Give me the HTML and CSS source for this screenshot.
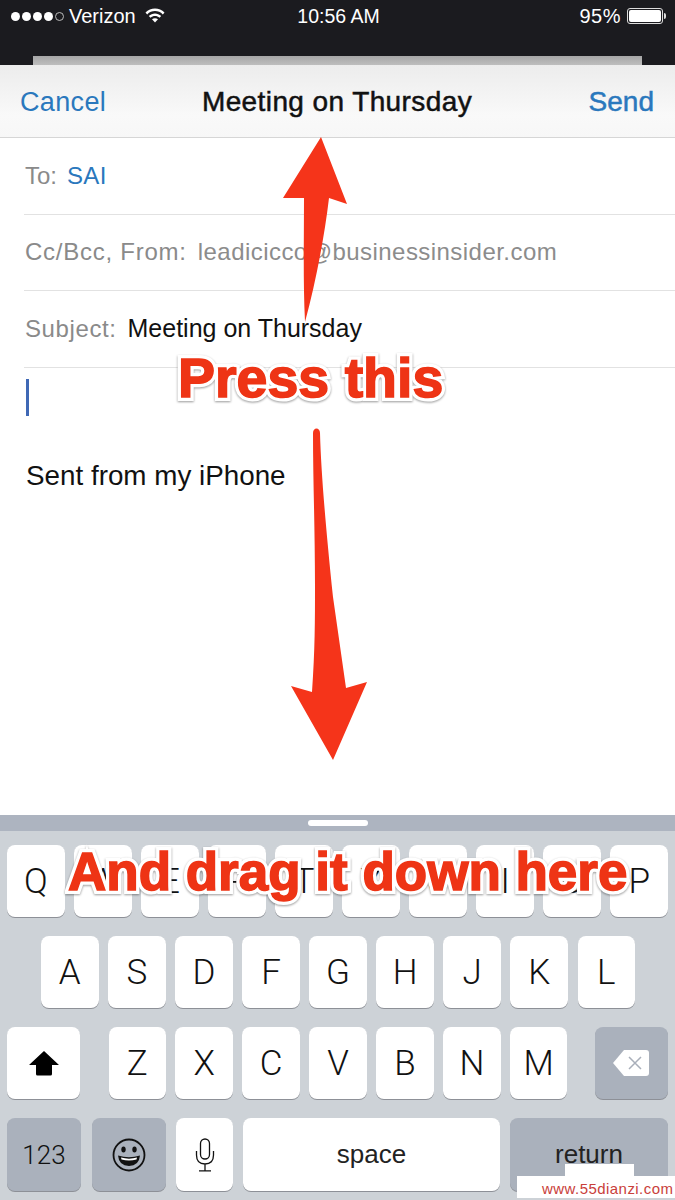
FILE: index.html
```html
<!DOCTYPE html>
<html lang="en">
<head>
<meta charset="utf-8">
<title>Meeting on Thursday</title>
<link rel="stylesheet" href="styles.css">
</head>
<body>
<div class="phone">
  <header class="status">
    <div class="status-left">
      <span class="dots"><i class="dot"></i><i class="dot"></i><i class="dot"></i><i class="dot"></i><i class="dot dot-empty"></i></span>
      <span class="carrier">Verizon</span>
      <svg class="wifi" width="20" height="16" viewBox="0 0 20 16"><path d="M0.5 5.5C5.5 0.2 14.5 0.2 19.5 5.5L17.8 7.4C13.5 3 6.5 3 2.2 7.4Z" fill="#fff"/><path d="M3.8 9C7.2 5.6 12.8 5.6 16.2 9L14.5 10.8C11.9 8.4 8.1 8.4 5.5 10.8Z" fill="#fff"/><path d="M7 12.2C8.7 10.8 11.3 10.8 13 12.2L10 15.4Z" fill="#fff"/></svg>
    </div>
    <div class="clock">10:56 AM</div>
    <div class="status-right">
      <span class="pct">95%</span>
      <span class="battery"><span class="battery-fill"></span></span>
      <span class="battery-tip"></span>
    </div>
  </header>
  <div class="strip"></div>
  <nav class="nav">
    <span class="nav-btn">Cancel</span>
    <span class="nav-title">Meeting on Thursday</span>
    <span class="nav-btn nav-send">Send</span>
  </nav>
  <main class="compose">
    <div class="row"><span class="label label-to">To:</span><span class="rcpt">SAI</span></div>
    <div class="row"><span class="label label-wide">Cc/Bcc, From:</span><span class="from">leadicicco@businessinsider.com</span></div>
    <div class="row"><span class="label label-subject">Subject:</span><span class="subject">Meeting on Thursday</span></div>
    <div class="body">
      <div class="caret"></div>
      <div class="signature">Sent from my iPhone</div>
    </div>
  </main>
  <section class="keyboard">
    <div class="kb-top"><span class="grip"></span></div>
    <div class="kb-rows">
      <div class="kb-row">
        <span class="key">Q</span><span class="key">W</span><span class="key">E</span><span class="key">R</span><span class="key">T</span><span class="key">Y</span><span class="key">U</span><span class="key">I</span><span class="key">O</span><span class="key">P</span>
      </div>
      <div class="kb-row kb-row-home">
        <span class="key">A</span><span class="key">S</span><span class="key">D</span><span class="key">F</span><span class="key">G</span><span class="key">H</span><span class="key">J</span><span class="key">K</span><span class="key">L</span>
      </div>
      <div class="kb-row">
        <span class="key key-shift"><svg width="32" height="26" viewBox="0 0 32 26"><path d="M16 1L31 15H24V24Q24 25.500 22.500 25.500H9.500Q8 25.500 8 24V15H1Z" fill="#000"/></svg></span>
        <span class="key key-first">Z</span><span class="key">X</span><span class="key">C</span><span class="key">V</span><span class="key">B</span><span class="key">N</span><span class="key">M</span>
        <span class="key key-del"><svg width="38" height="28" viewBox="0 0 38 28"><path d="M12 1H34Q37 1 37 4V24Q37 27 34 27H12L1 14Z" fill="#fff"/><path d="M17 8L29 20M29 8L17 20" stroke="#a9afba" stroke-width="1.500" fill="none"/></svg></span>
      </div>
      <div class="kb-row kb-row-bottom">
        <span class="key key-fn key-123">123</span>
        <span class="key key-fn key-emoji"><svg width="34" height="34" viewBox="0 0 34 34"><circle cx="17" cy="17" r="15.500" fill="none" stroke="#111" stroke-width="1.800"/><ellipse cx="11.500" cy="11.500" rx="2.200" ry="3" fill="#111"/><ellipse cx="22.500" cy="11.500" rx="2.200" ry="3" fill="#111"/><path d="M6 17.500Q17 21 28 17.500Q27 28 17 28Q7 28 6 17.500Z" fill="#111"/><path d="M9 19.500Q17 21.800 25 19.500L24.500 21.500Q17 23.500 9.500 21.500Z" fill="#fff"/></svg></span>
        <span class="key key-mic"><svg width="20" height="34" viewBox="0 0 20 34"><rect x="5.500" y="1" width="9" height="20" rx="4.500" fill="none" stroke="#111" stroke-width="1.300"/><path d="M1.500 13V17Q1.500 26 10 26Q18.500 26 18.500 17V13M10 26V32.500M4 32.800H16" fill="none" stroke="#111" stroke-width="1.300"/></svg></span>
        <span class="key key-space">space</span>
        <span class="key key-fn key-return">return</span>
      </div>
    </div>
  </section>

  <svg class="arrows" width="675" height="800" viewBox="0 0 675 800">
    <path d="M321 137L347 204L329 198C324 240 315 285 305 322C303 280 304 240 304 198L283 198Z" fill="#f5341a"/>
    <path d="M313 433C313 427 320 427 320 433C321 470 325 520 333 597L346 688L367 682L333 760L291 686L312 692C315 650 315 620 315 587C315 530 313 480 313 433Z" fill="#f5341a"/>
  </svg>
  <div class="callout callout-press" data-text="Press this">Press this</div>
  <div class="callout callout-drag" data-text="And drag it down here">And drag it down here</div>
  <div class="mark-top"></div>
  <div class="mark">www.55dianzi.com</div>
</div>
</body>
</html>
```
FILE: styles.css
```css
* { box-sizing: border-box; }
html, body { margin: 0; padding: 0; }
body { width: 675px; height: 1200px; overflow: hidden; background: #fff; font-family: "Liberation Sans", Arial, sans-serif; }

.phone { position: relative; width: 675px; height: 1200px; display: flex; flex-direction: column; background: #1b1b1f; overflow: hidden; }

.status { height: 56px; flex: none; padding: 4px 9px 0 11px; display: grid; grid-template-columns: 1fr auto 1fr; align-items: start; color: #fff; font-size: 20px; line-height: 24px; }
.status-left { display: flex; align-items: center; }
.dots { display: flex; gap: 2px; margin-right: 5px; }
.dot { width: 9px; height: 9px; border-radius: 50%; background: #fff; }
.dot-empty { background: none; border: 1px solid #bbb; }
.carrier { font-size: 20px; }
.wifi { margin-left: 9px; margin-top: -3px; }
.clock { font-size: 19.500px; }
.status-right { display: flex; align-items: center; justify-content: flex-end; }
.pct { font-size: 20px; margin-right: 6px; letter-spacing: .5px; }
.battery { width: 36px; height: 16px; border: 1px solid #ddd; border-radius: 3px; padding: 1px; display: flex; }
.battery-fill { flex: 1; background: #fff; border-radius: 2px; }
.battery-tip { width: 2px; height: 6px; background: #ddd; border-radius: 0 2px 2px 0; margin-left: 1px; }

.strip { height: 9px; flex: none; margin: 0 33px 0 33px; background: linear-gradient(#a6a6a6, #bdbdbd); }

.nav { height: 73px; flex: none; padding: 3px 21px 1px 20px; display: flex; align-items: center; justify-content: space-between; background: linear-gradient(#ececec, #f9f9f9 70%, #f7f7f7); border-bottom: 1px solid #d6d6d6; }
.nav-btn { font-size: 27px; color: #2a78bd; width: 90px; letter-spacing: .35px; }
.nav-send { text-align: right; font-size: 28px; width: 90px; letter-spacing: 0; -webkit-text-stroke: .5px #2a78bd; }
.nav-title { font-size: 28px; color: #111; -webkit-text-stroke: .5px #111; letter-spacing: .4px; }

.compose { flex: 1; min-height: 0; background: #fff; display: flex; flex-direction: column; }
.row { height: 76.500px; flex: none; margin-left: 24px; padding-left: 1px; border-bottom: 1px solid #e2e2e2; display: flex; align-items: center; font-size: 24px; white-space: nowrap; }
.label { color: #8a8a8a; margin-right: 11px; letter-spacing: .4px; }
.label-to { margin-right: 10px; letter-spacing: 0; }
.label-wide { letter-spacing: .75px; }
.label-subject { letter-spacing: .6px; }
.rcpt { color: #2a78bd; letter-spacing: .3px; }
.from { color: #8c8c8c; letter-spacing: .45px; }
.subject { color: #111; font-size: 25px; }
.body { padding: 11px 0 0 26px; }
.caret { width: 3px; height: 37px; background: #3f68b5; }
.signature { margin-top: 45px; font-size: 27.800px; line-height: 30px; color: #111; }

.keyboard { height: 385px; flex: none; background: #cdd2d7; display: flex; flex-direction: column; }
.kb-top { height: 16px; flex: none; background: #adb4c0; display: flex; justify-content: center; padding-top: 5px; }
.grip { width: 60px; height: 6px; background: #fff; border-radius: 3px; }
.kb-rows { flex: 1; padding: 14px 7px 0; display: flex; flex-direction: column; gap: 19px; }
.kb-row { height: 72px; flex: none; display: flex; gap: 9.500px; }
.kb-row-home { padding: 0 33px 0 34px; }
.kb-row-bottom { gap: 10px; height: 73px; }
.key { flex: 1 1 0; min-width: 0; background: #fff; border-radius: 8px; box-shadow: 0 1px 0 #8d9097; display: flex; align-items: center; justify-content: center; font-family: Roboto, "Liberation Sans", sans-serif; font-weight: 300; font-size: 35px; color: #111; }
.key-shift { flex: 0 0 73px; }
.key-first { margin-left: 19px; }
.key-del { flex: 0 0 73px; margin-left: 18px; background: #aab1bc; }
.key-fn { background: #aab1bc; }
.key-123 { flex: 0 0 74px; margin-right: 1px; font-size: 26px; }
.key-emoji { flex: 0 0 74px; }
.key-mic { flex: 0 0 57px; }
.key-space { flex: 0 0 257px; font-family: "Liberation Sans", sans-serif; font-weight: 400; font-size: 26px; color: #222; }
.key-return { flex: 1 1 0; font-family: "Liberation Sans", sans-serif; font-weight: 400; font-size: 26px; color: #222; }

.arrows { position: absolute; left: 0; top: 0; pointer-events: none; }
.callout { position: absolute; font-weight: 700; color: #ee3415; white-space: nowrap; -webkit-text-stroke: 8px #fff; paint-order: stroke fill; filter: drop-shadow(0 1px 1px rgba(0,0,0,.4)); }
.callout::after { content: attr(data-text); position: absolute; left: 0; top: 0; -webkit-text-stroke: 1.500px #ee3415; }
.callout-press { left: 178px; top: 346px; font-size: 55.500px; line-height: 64px; }
.callout-drag { left: 68px; top: 841px; font-size: 53px; line-height: 62px; }

.mark-top { position: absolute; left: 565px; top: 1164px; width: 69px; height: 12px; background: #fff; }
.mark { position: absolute; left: 517px; top: 1176px; width: 158px; height: 22px; background: #fff; color: #c9403a; font-size: 15px; line-height: 26px; padding-left: 25px; letter-spacing: .45px; white-space: nowrap; }
```
